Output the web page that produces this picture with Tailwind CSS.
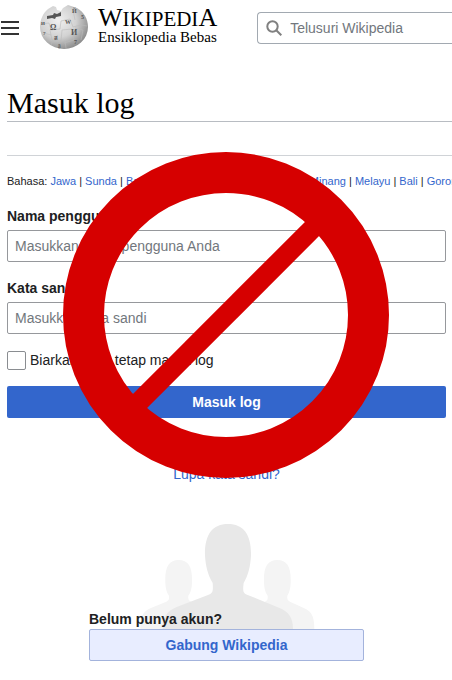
<!DOCTYPE html>
<html lang="id">
<head>
    <meta charset="UTF-8">
    <meta name="viewport" content="width=device-width, initial-scale=1.0">
    <title>Masuk log - Wikipedia</title>
    <script src="https://cdn.jsdelivr.net/npm/@tailwindcss/browser@4"></script>
</head>
<body class="relative min-h-screen overflow-x-hidden bg-white font-['Liberation_Sans',Arial,sans-serif] text-sm leading-5 text-[#202122]">
    <header class="flex h-14 items-center overflow-hidden">
        <button type="button" aria-label="Menu" class="shrink-0">
            <svg class="h-5 w-5" viewBox="0 0 20 20" fill="#333"><path d="M1 3h18v2H1zM1 9h18v2H1zM1 15h18v2H1z"/></svg>
        </button>
        <a href="#" class="ml-5 flex shrink-0 items-center gap-2.5 pb-1">
            <svg class="h-12 w-12" viewBox="0 0 48 48">
                <defs>
                    <radialGradient id="globe" cx=".38" cy=".36" r=".68">
                        <stop offset="0" stop-color="#f0f0f0"/>
                        <stop offset=".55" stop-color="#d2d2d2"/>
                        <stop offset="1" stop-color="#8b8b8b"/>
                    </radialGradient>
                </defs>
                <path d="M8 7l5-3 3 1 1 3 4 1 2-3 5-3 9 3C44 10 48 17 48 25a24 22 0 0 1-48 0C0 18 3 11 8 7z" fill="url(#globe)"/>
                <path d="M7 14l6-1 1-2 3 1 4-2v4l-5 1-1 2-3-1-5 1z" fill="#555"/>
                <path d="M1 22l8-1 2 7 9-1 1-8 9-2 3 8 8-2 6 1M10 28l2 10 9 1 1-11M22 28l10-1 2 11-10 3M33 8l2 10M35 26l8 2-2 10M4 31l7 2M13 38l-2 5M25 39l1 7" fill="none" stroke="#bbb" stroke-width=".6"/>
                <g fill="#555" font-family="Liberation Serif" font-weight="bold">
                    <text x="10" y="28" font-size="8">Ω</text>
                    <text x="25" y="22" font-size="6">W</text>
                    <text x="31" y="33" font-size="8">И</text>
                    <text x="14" y="38" font-size="6">ส</text>
                    <text x="34" y="42" font-size="6">7</text>
                    <text x="1" y="23" font-size="5">И</text>
                    <text x="3" y="33" font-size="5">7</text>
                    <text x="32" y="11" font-size="6">Й</text>
                    <text x="41" y="17" font-size="6">5</text>
                    <text x="18" y="45" font-size="5">ვ</text>
                </g>
            </svg>
            <span class="flex flex-col font-['Liberation_Serif',serif] text-black">
                <span class="text-[21px] leading-5"><span class="text-[26px] leading-5">W</span>IKIPEDI<span class="text-[26px] leading-5">A</span></span>
                <span class="text-[15px] leading-4">Ensiklopedia Bebas</span>
            </span>
        </a>
        <label class="ml-10 flex h-8 min-w-[195px] grow items-center gap-2 rounded-l-sm border border-r-0 border-[#a2a9b1] pl-2">
            <svg class="h-4 w-4 shrink-0" viewBox="0 0 16 16" fill="none" stroke="#808080" stroke-width="2"><circle cx="6.5" cy="6.5" r="5.2"/><path d="M10.3 10.3l5 5"/></svg>
            <input type="search" aria-label="Telusuri Wikipedia" placeholder="Telusuri Wikipedia" class="min-w-0 grow outline-none placeholder:text-[#72777d]">
        </label>
    </header>

    <main class="flex flex-col px-[7px] pr-1.5">
        <h1 class="mt-[29px] -mr-1.5 border-b border-[#b8bcc2] font-['Liberation_Serif',serif] text-[30px] leading-9 text-black">Masuk log</h1>
        <div class="-mr-1.5 h-[34px] border-b border-[#d0d3d7]"></div>
        <p class="mt-[17px] -mr-1.5 overflow-hidden text-[11px] leading-4 whitespace-nowrap">Bahasa:
            <a href="#" class="text-[#3366cc]">Jawa</a> |
            <a href="#" class="text-[#3366cc]">Sunda</a> |
            <a href="#" class="text-[#3366cc]">Banyumasan</a> |
            <a href="#" class="text-[#3366cc]">Bugis</a> |
            <a href="#" class="text-[#3366cc]">Aceh</a> |
            <a href="#" class="text-[#3366cc]">Banjar</a> |
            <a href="#" class="text-[#3366cc]">Minang</a> |
            <a href="#" class="text-[#3366cc]">Melayu</a> |
            <a href="#" class="text-[#3366cc]">Bali</a> |
            <a href="#" class="text-[#3366cc]">Gorontalo</a>
        </p>

        <form class="mt-[17px] flex flex-col">
            <label for="username" class="font-bold">Nama pengguna</label>
            <input id="username" type="text" placeholder="Masukkan nama pengguna Anda" class="mt-1 h-8 rounded-xs border border-[#96989c] px-[7px] placeholder:text-[#72777d]">
            <label for="password" class="mt-4 font-bold">Kata sandi</label>
            <input id="password" type="password" placeholder="Masukkan kata sandi" class="mt-1 h-8 rounded-xs border border-[#96989c] px-[7px] placeholder:text-[#72777d]">
            <div class="mt-4 flex items-center gap-1">
                <input id="remember" type="checkbox" class="h-[19px] w-[19px] appearance-none rounded-xs border border-[#8a8d91] checked:bg-[#3366cc]">
                <label for="remember">Biarkan saya tetap masuk log</label>
            </div>
            <button type="submit" class="mt-4 h-8 rounded-xs bg-[#3366cc] font-bold text-white">Masuk log</button>
        </form>
        <a href="#" class="mt-[46px] self-center text-[#3366cc]">Lupa kata sandi?</a>

        <section class="mt-[38px] grid w-[275px] max-w-full self-center">
            <svg class="col-start-1 row-start-1 h-[107px] w-[180px] justify-self-center" viewBox="168 36 540 321">
                <path d="M178 357c0-30 5-52 30-62l48-20c8-3 9-9 8-18-8-11-10-22-11-38-2-48 10-69 40-69s42 21 40 69c-1 16-3 27-11 38-1 9 0 15 8 18l70 30v52zM700 357c0-30-5-52-30-62l-43-20c-8-3-9-9-8-18 7-11 9-22 10-38 2-48-10-69-40-69s-42 21-40 69c1 16 3 27 11 38 1 9 0 15-8 18l-70 30v52z" fill="#f4f4f4"/>
                <path d="M245 357c0-34 12-54 42-66l94-36c14-5 16-11 14-36-14-23-21-50-23-81-2-62 21-96 69-96s71 34 69 96c-2 31-8 58-22 81-3 25-2 31 12 36l94 38c30 12 42 30 42 64z" fill="#e8e8e8"/>
            </svg>
            <h2 class="col-start-1 row-start-1 self-end font-bold">Belum punya akun?</h2>
            <a href="#" class="flex h-8 items-center justify-center rounded-xs border border-[#a3b3dc] bg-[#e8edff] font-bold text-[#3366cc]">Gabung Wikipedia</a>
        </section>
    </main>

    <!-- prohibition sign over the form -->
    <svg class="pointer-events-none absolute top-[152px] left-1/2 h-[326px] w-[326px] -translate-x-1/2" viewBox="0 0 326 326" fill="none" stroke="#d60000">
        <circle cx="163" cy="163" r="142.5" stroke-width="41"/>
        <path d="M70 256L256 70" stroke-width="20"/>
    </svg>
</body>
</html>
